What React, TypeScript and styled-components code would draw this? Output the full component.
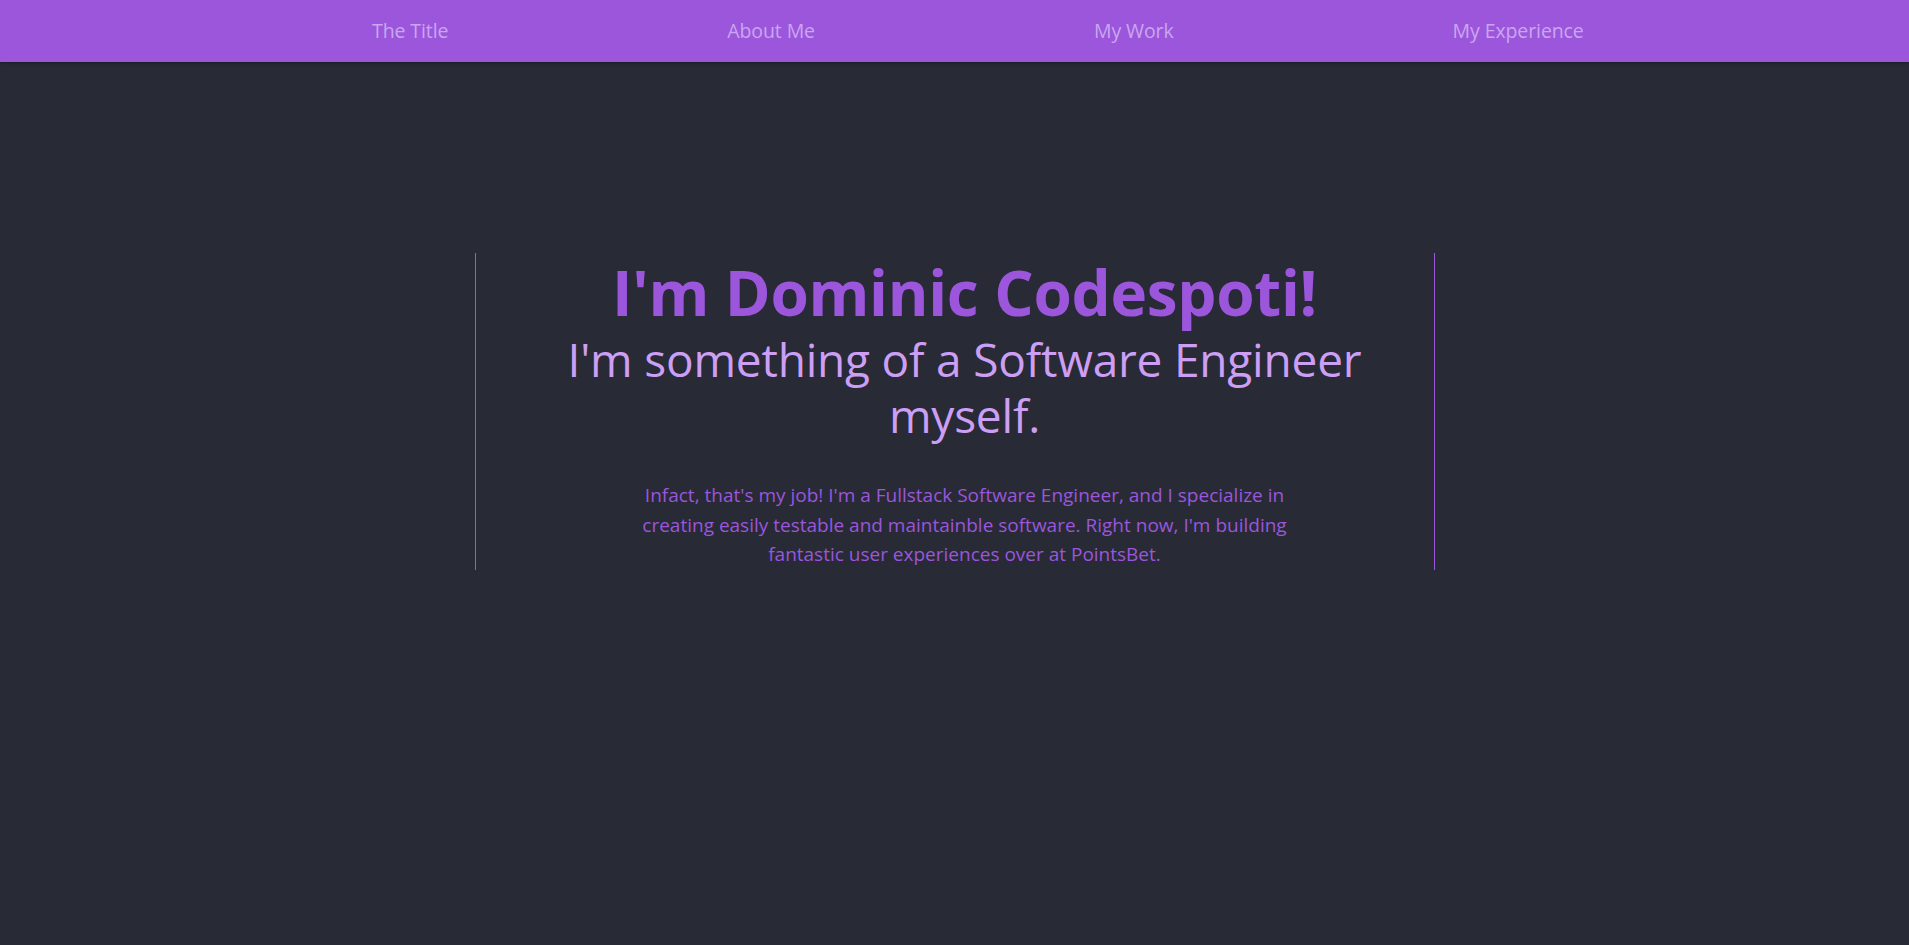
import React from "react";
import styled, { createGlobalStyle } from "styled-components";

const GlobalStyle = createGlobalStyle`
  html, body {
    margin: 0;
    padding: 0;
    background: #282a36;
  }
  body {
    font-family: "Open Sans", "Noto Sans", sans-serif;
    min-height: 945px;
  }
`;

const Page = styled.div`
  min-height: 945px;
  background: #282a36;
  display: flex;
  flex-direction: column;
`;

const NavBar = styled.nav`
  height: 62px;
  background: #9b56dc;
  box-shadow: 0 1px 3px rgba(0, 0, 0, 0.35);
  display: flex;
  align-items: center;
  padding-left: 372px;
  padding-bottom: 1px;
  gap: 279px;
  box-sizing: border-box;
`;

const NavItem = styled.a`
  color: #caa6f0;
  font-size: 19.5px;
  letter-spacing: -0.1px;
  text-decoration: none;
  cursor: pointer;
  white-space: nowrap;
`;

const Hero = styled.section`
  align-self: center;
  width: 960px;
  margin-top: 191px;
  padding-left: 20px;
  border-left: 1px solid #9b56dc;
  border-right: 1px solid #9b56dc;
  display: flex;
  flex-direction: column;
  align-items: center;
  text-align: center;
  box-sizing: border-box;
`;

const Heading = styled.h1`
  margin: 0;
  color: #9b56dc;
  font-size: 62px;
  font-weight: 700;
  line-height: 78px;
  letter-spacing: -0.3px;
`;

const Subtitle = styled.h2`
  margin: 0;
  max-width: 860px;
  color: #cc9ff5;
  font-size: 46px;
  font-weight: 400;
  line-height: 56px;
  letter-spacing: -0.2px;
`;

const Blurb = styled.p`
  margin: 38px 0 0;
  max-width: 662px;
  color: #9b56dc;
  font-size: 19px;
  line-height: 29.5px;
  letter-spacing: 0;
`;

const navLinks = ["The Title", "About Me", "My Work", "My Experience"];

export default function App() {
  return (
    <>
      <GlobalStyle />
      <Page>
        <NavBar>
          {navLinks.map((l) => (
            <NavItem key={l}>{l}</NavItem>
          ))}
        </NavBar>
        <Hero>
          <Heading>I'm Dominic Codespoti!</Heading>
          <Subtitle>I'm something of a Software Engineer myself.</Subtitle>
          <Blurb>
            Infact, that's my job! I'm a Fullstack Software Engineer, and I
            specialize in creating easily testable and maintainble software.
            Right now, I'm building fantastic user experiences over at
            PointsBet.
          </Blurb>
        </Hero>
      </Page>
    </>
  );
}
